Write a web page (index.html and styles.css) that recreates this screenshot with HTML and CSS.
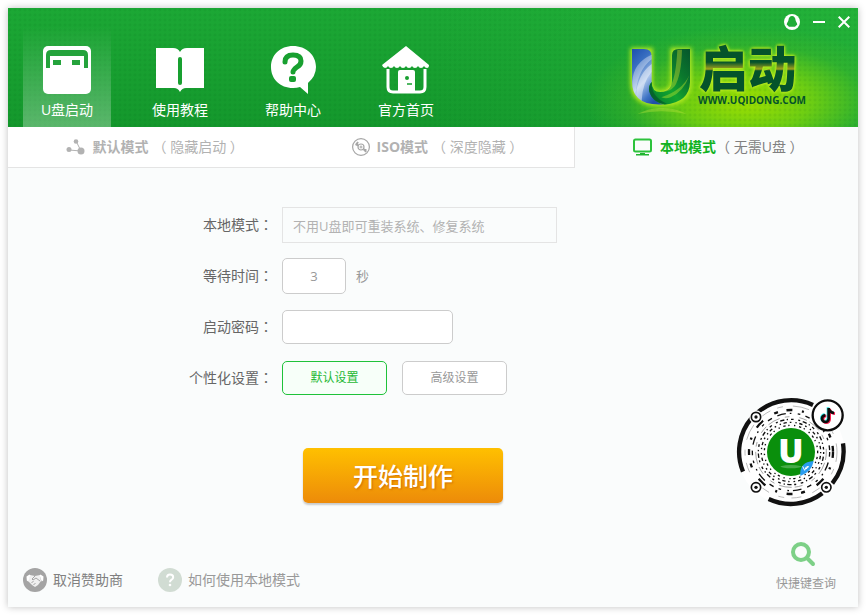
FILE: index.html
```
<!DOCTYPE html>
<html lang="zh-CN">
    <head>
        <meta charset="utf-8">
        <title>U启动</title>
        <link rel="stylesheet" href="styles.css">
    </head>
    <body>
        <div class="window">
        <!-- Header -->
        <header class="header">
            <nav class="nav">
                <a href="#usb" class="nav-item active">
                    <svg width="48" height="48" viewBox="0 0 48 48">
                        <rect width="48" height="48" rx="5" fill="#fff"/>
                        <path d="M3 22V9q0-5 5-5h32q5 0 5 5v13h-4V10H7v12z" fill="#25a33c"/>
                        <path d="M10 14h8v5h-8zM29 14h8v5h-8z" fill="#25a33c"/>
                    </svg>
                    <span>U盘启动</span>
                </a>
                <a href="#guide" class="nav-item">
                    <svg width="50" height="48" viewBox="0 0 50 48">
                        <path d="M1 2h17q5 0 7 4q2-4 7-4h17v40H31q-4 0-6 4q-2-4-6-4H1z" fill="#fff"/>
                        <path d="M25 13v24" stroke="#18a030" stroke-width="4" stroke-linecap="round"/>
                    </svg>
                    <span>使用教程</span>
                </a>
                <a href="#help" class="nav-item">
                    <svg width="48" height="48" viewBox="0 0 48 48">
                        <path d="M24 0C11 0 2 9 2 21s9 21 22 21q4 0 7-1l8 7v-11q8-7 8-16C47 9 37 0 24 0z" fill="#fff"/>
                        <path d="M16 16q0-7 8-7 8 0 8 6 0 4-4 6-4 3-4 5" fill="none" stroke="#18a030" stroke-width="5" stroke-linecap="round" stroke-linejoin="round"/>
                        <rect x="20" y="30" width="7" height="6" rx="2" fill="#18a030"/>
                    </svg>
                    <span>帮助中心</span>
                </a>
                <a href="#home" class="nav-item">
                    <svg width="48" height="48" viewBox="0 0 48 48">
                        <path d="M24 0L0 19q1 3 3 3 2 0 3-2 1 2 3 2t3-2q1 2 3 2t3-2q1 2 3 2t3-2q1 2 3 2t3-2q1 2 3 2t3-2q1 2 3 2t3-2q1 2 3 2 2 0 2-3z" fill="#fff"/>
                        <path d="M6 23v18q0 5 5 5h27q5 0 5-5V23" fill="none" stroke="#fff" stroke-width="3"/>
                        <path d="M16 47V26q0-2 2-2h13q2 0 2 2v21z" fill="#fff"/>
                        <circle cx="25" cy="32" r="2" fill="#18a030"/>
                        <path d="M25 38h5" stroke="#18a030" stroke-width="1.500"/>
                    </svg>
                    <span>官方首页</span>
                </a>
            </nav>
            <div class="brand">
                <div class="controls">
                    <button type="button" aria-label="QQ">
                        <svg width="16" height="16" viewBox="0 0 16 16">
                            <circle cx="8" cy="8" r="8" fill="#fff"/>
                            <path d="M8 2C6 2 4.500 4 4.500 6c0 1-2 3-1.700 5 .1.800.7.200 1 0 .3 1 .9 1.500 1.300 1.700h5.800c.4-.2 1-.7 1.300-1.700.3.200.9.800 1 0 .3-2-1.700-4-1.700-5 0-2-1.500-4-3.500-4z" fill="#20ac38"/>
                        </svg>
                    </button>
                    <button type="button" aria-label="最小化">
                        <svg width="12" height="12" viewBox="0 0 12 12"><path d="M0 6h12" stroke="#fff" stroke-width="2"/></svg>
                    </button>
                    <button type="button" aria-label="关闭">
                        <svg width="12" height="12" viewBox="0 0 12 12"><path d="M.7.7l10.600 10.600M11.300.7L.7 11.300" stroke="#fff" stroke-width="2"/></svg>
                    </button>
                </div>
                <svg class="logo" width="196" height="82" viewBox="66 120 588 246" role="img" aria-label="U启动">
                    <defs>
                        <linearGradient id="blue" x1="0" y1="0" x2=".6" y2="1">
                            <stop offset="0" stop-color="#1c4fae"/>
                            <stop offset=".3" stop-color="#3a70c2"/>
                            <stop offset=".6" stop-color="#a9c4ea"/>
                            <stop offset=".85" stop-color="#3d72c4"/>
                            <stop offset="1" stop-color="#2050a8"/>
                        </linearGradient>
                        <linearGradient id="green" x1="1" y1="0" x2="0" y2="1">
                            <stop offset="0" stop-color="#06552c"/>
                            <stop offset=".35" stop-color="#0b7a2d"/>
                            <stop offset=".6" stop-color="#12a52f"/>
                            <stop offset=".8" stop-color="#0a8f2f"/>
                            <stop offset="1" stop-color="#04582c"/>
                        </linearGradient>
                        <linearGradient id="ink" gradientUnits="userSpaceOnUse" x1="0" y1="150" x2="0" y2="280">
                            <stop offset=".28" stop-color="#04532b"/>
                            <stop offset=".44" stop-color="#a3a21c"/>
                            <stop offset=".48" stop-color="#04532b"/>
                        </linearGradient>
                        <filter id="glow" x="-20%" y="-20%" width="140%" height="140%">
                            <feGaussianBlur stdDeviation="6"/>
                        </filter>
                    </defs>
                    <path d="M96 148h58v100q0 28 28 28 34 0 34-34V148h54v100q0 66-88 66-86 0-86-66z" fill="#b4ea20" stroke="#b4ea20" stroke-width="10" filter="url(#glow)"/>
                    <!-- blue half of the mark -->
                    <path d="M96 147h36q23 0 23 22v78q-12 14-4 32q12 28 40 34q-52 4-76-18q-19-18-19-50z" fill="url(#blue)"/>
                    <path d="M97 246q2-58 58-82v14q-44 34-48 108q-10-14-10-40z" fill="#fff" opacity=".35"/>
                    <path d="M108 286q4-62 47-94v24q-28 32-30 86q-12-6-17-16z" fill="#fff" opacity=".45"/>
                    <!-- green half of the mark -->
                    <path d="M270 147v100q-2 60-76 67q-38-8-46-40q-4-16 7-28q0 30 26 30q35-2 35-36v-74q0-19 20-19z" fill="url(#green)"/>
                    <path d="M232 149q-4 76-18 104q-10 18-28 22q22 2 38-16q20-32 22-110z" fill="#d3e02a" opacity=".4"/>
                    <path d="M268 226q-22 46-84 66q14 6 28 0q40-18 56-66z" fill="#c5e82a" opacity=".4"/>
                    <path d="M155 246q-3 44 47 66q-42 0-54-36q-4-18 7-30z" fill="#04582c" opacity=".7"/>
                    <path d="M112 342q40-20 72-18 40-2 76 18-76-16-148 0z" fill="#b6e33c" opacity=".4"/>
                    <text class="logo-name" x="296" y="261" fill="url(#ink)">启动</text>
                    <text class="logo-url" x="294" y="312">WWW.UQIDONG.COM</text>
                </svg>
            </div>
        </header>

        <!-- Mode tabs -->
        <nav class="tabs">
            <a href="#default" class="tab">
                <svg width="20" height="16" viewBox="0 0 20 16" fill="#b2b2b2">
                    <path d="M3 11l12 1M10 2l5 10" stroke="#b2b2b2" fill="none"/>
                    <circle cx="3" cy="10.500" r="2.500"/><circle cx="10" cy="2.500" r="2.300"/><circle cx="15" cy="12" r="3.500"/>
                </svg>
                <strong>默认模式</strong>
                <span>（ 隐藏启动 ）</span>
            </a>
            <a href="#iso" class="tab">
                <svg width="18" height="18" viewBox="0 0 18 18" fill="none" stroke="#a6a6a6">
                    <circle cx="9" cy="9" r="8.400" stroke-width="1.200"/>
                    <path d="M4 7l2-3M3.500 6l3 1.500M11.500 12l3 0M12 11l2 3" stroke-width="2"/>
                    <circle cx="9" cy="9" r="3" fill="#fff" stroke-width="1.200"/>
                    <circle cx="9" cy="9" r="1"/>
                </svg>
                <strong>ISO模式</strong>
                <span>（ 深度隐藏 ）</span>
            </a>
            <a href="#local" class="tab current">
                <svg width="20" height="18" viewBox="0 0 20 18">
                    <rect x="1" y="1.500" width="17" height="12" rx="1.500" fill="none" stroke="#2cc23c" stroke-width="2"/>
                    <path d="M7 15h5v1h4v1.500H3V16h4z" fill="#1eb42e"/>
                </svg>
                <strong>本地模式</strong>
                <span>（ 无需U盘 ）</span>
            </a>
        </nav>

        <!-- Settings -->
        <main class="content">
            <form class="form">
                <div class="row">
                    <label for="mode">本地模式<i lang="zh-TW">：</i></label>
                    <input type="text" id="mode" class="mode" value="不用U盘即可重装系统、修复系统" readonly>
                </div>
                <div class="row">
                    <label for="wait">等待时间<i lang="zh-TW">：</i></label>
                    <input type="text" id="wait" class="wait" value="3">
                    <span class="unit">秒</span>
                </div>
                <div class="row">
                    <label for="password">启动密码<i lang="zh-TW">：</i></label>
                    <input type="password" id="password" class="password">
                </div>
                <div class="row">
                    <label for="defaults">个性化设置<i lang="zh-TW">：</i></label>
                    <button type="button" id="defaults" class="option selected">默认设置</button>
                    <button type="button" class="option">高级设置</button>
                </div>
                <button type="button" class="start">开始制作</button>
            </form>
            <svg class="code" width="110" height="110" viewBox="19 21 330 330">
                <circle cx="184" cy="186" r="160" fill="#fff"/>
                <g fill="none" stroke="#111">
                    <g stroke-width="13">
                        <path d="M84 67A156 156 0 0 1 250 45"/>
                        <path d="M66 84A156 156 0 0 0 40 245"/>
                        <path d="M117 327A156 156 0 0 0 278 310"/>
                        <path d="M340 160A156 156 0 0 1 308 280"/>
                    </g>
                    <circle cx="184" cy="186" r="138" stroke-width="2" stroke="#999" stroke-dasharray="30 22 18 30 50 35"/>
                    <circle cx="184" cy="186" r="126" stroke-width="7" stroke-dasharray="18 29 6 34 28 40 12 26"/>
                    <circle cx="184" cy="186" r="116" stroke-width="4" stroke-dasharray="14 18 26 12 5 19 8 16"/>
                    <circle cx="184" cy="186" r="106" stroke-width="2" stroke="#777" stroke-dasharray="24 9 38 16 14 30"/>
                    <circle cx="184" cy="186" r="98" stroke-width="4" stroke-dasharray="6 8 13 7 4 9 8 14"/>
                    <circle cx="184" cy="186" r="89" stroke-width="4" stroke-dasharray="4 8 10 9 5 12"/>
                    <circle cx="184" cy="186" r="80" stroke-width="4" stroke-dasharray="4 11 7 8 4 14"/>
                </g>
                <g fill="#fff" stroke="#111" stroke-width="5">
                    <circle cx="79" cy="81" r="20" stroke="none"/><circle cx="79" cy="81" r="14"/>
                    <circle cx="79" cy="292" r="20" stroke="none"/><circle cx="79" cy="292" r="14"/>
                    <circle cx="290" cy="292" r="20" stroke="none"/><circle cx="290" cy="292" r="14"/>
                </g>
                <g fill="#111"><circle cx="79" cy="81" r="5"/><circle cx="79" cy="292" r="5"/><circle cx="290" cy="292" r="5"/></g>
                <circle cx="184" cy="186" r="74" fill="#fff"/>
                <circle cx="184" cy="186" r="72" fill="#0a8f0c"/>
                <text class="code-mark" x="184" y="219">U</text>
                <path d="M152 229q32-8 64 0q-6 6-32 6t-32-6z" fill="#fff" opacity=".25"/>
                <path d="M252 213q-5 32-40 45q-4-42 40-45z" fill="#2a9df0"/>
                <path d="M219 229l6 12 5-11M234 228l-5 9 9-8" fill="none" stroke="#fff" stroke-width="3"/>
                <circle cx="294" cy="76" r="45" fill="#fff" stroke="#0c0c0c" stroke-width="7"/>
                <g fill="none" stroke-width="8">
                    <path d="M297 54v32a10 10 0 1 1-10-10M297 56q3 12 16 13" stroke="#25e5e0" transform="translate(-2 -2)"/>
                    <path d="M297 54v32a10 10 0 1 1-10-10M297 56q3 12 16 13" stroke="#f5204f" transform="translate(3 2)"/>
                    <path d="M297 54v32a10 10 0 1 1-10-10M297 56q3 12 16 13" stroke="#0c0c0c"/>
                </g>
            </svg>
        </main>

        <!-- Footer -->
        <footer class="footer">
            <a href="#sponsor" class="foot-link dark">
                <svg width="24" height="24" viewBox="0 0 24 24">
                    <circle cx="12" cy="12" r="12" fill="#a4a4a4"/>
                    <path d="M7 7l5 1 5-1 1 6-3 4-3 2-3-2-4-4z" fill="#f0f0f0"/>
                    <path d="M3.500 8.500l3-2 .8 1-2 6-1.500-1zM20.500 8.500l-3-2-.8 1 2 6 1.500-1z" fill="#fff"/>
                    <path d="M17 13l-4-3-3 2-1-1 3-3M8.500 15l2-2M10.500 17l2-2" stroke="#a4a4a4" fill="none"/>
                </svg>
                <span>取消赞助商</span>
            </a>
            <a href="#howto" class="foot-link">
                <svg width="24" height="24" viewBox="0 0 24 24">
                    <circle cx="12" cy="12" r="12" fill="#d1dcd3"/>
                    <path d="M9 9.500q0-3 3-3 3.200 0 3.200 2.700 0 1.500-1.600 2.500-1.600 1-1.600 2.600" fill="none" stroke="#fff" stroke-width="2"/>
                    <circle cx="12" cy="17" r="1.300" fill="#fff"/>
                </svg>
                <span>如何使用本地模式</span>
            </a>
            <a href="#keys" class="search-link">
                <svg width="30" height="26" viewBox="0 0 30 26" fill="none" stroke="#7dd087" stroke-linecap="round">
                    <circle cx="10" cy="10" r="8" stroke-width="4"/>
                    <path d="M17 17l5 5" stroke-width="4"/>
                </svg>
                <span>快捷键查询</span>
            </a>
        </footer>
        </div>
    </body>
</html>
```
FILE: styles.css
```
/* General */
* {
    box-sizing: border-box;
}

body {
    font-family: "Open Sans", "Noto Sans CJK SC", sans-serif;
    font-size: 14px;
    line-height: 20px;
    margin: 0;
    padding: 8px 8px 9px;
    background-color: #fff;
    color: #666;
}

a {
    color: inherit;
    text-decoration: none;
}

svg {
    display: block;
    flex: none;
}

button,
input {
    font: inherit;
    color: inherit;
}

button {
    cursor: pointer;
}

.window {
    display: flex;
    flex-direction: column;
    min-height: calc(100vh - 17px);
    background-color: #fafcfc;
    box-shadow: 0 0 7px rgba(0, 0, 0, 0.25);
}

/* Header */
.header {
    display: flex;
    justify-content: space-between;
    height: 119px;
    padding-left: 15px;
    color: #fff;
    background-color: #18a030;
    background-image:
        radial-gradient(circle at 2px 2px, rgba(0, 80, 20, 0.08) 1px, transparent 2px),
        radial-gradient(160px 75px at right 112px bottom 26px, #9ee000, rgba(130, 215, 10, 0.8) 40%, rgba(80, 190, 30, 0.3) 75%, transparent),
        linear-gradient(to right, transparent 50%, rgba(40, 185, 60, 0.6)),
        linear-gradient(#1ca835, #14982c);
    background-size: 5px 5px, auto, auto, auto;
}

.nav {
    display: flex;
    gap: 25px;
}

.nav-item {
    display: flex;
    flex-direction: column;
    align-items: center;
    gap: 6px;
    width: 88px;
    padding-top: 38px;
}

.nav-item.active {
    background: linear-gradient(transparent 15%, rgba(255, 255, 255, 0.3));
}

.brand {
    display: flex;
    flex-direction: column;
    align-items: flex-end;
}

.controls {
    display: flex;
    align-items: center;
    gap: 13px;
    height: 28px;
    padding-right: 8px;
}

.controls button {
    padding: 0;
    border: 0;
    background: none;
}

.logo {
    margin: 4px 40px 0 0;
    overflow: visible;
}

.logo-name {
    font-size: 147px;
    font-weight: 900;
    filter: drop-shadow(0 0 5px #c8f01e) drop-shadow(0 0 5px #b4ea20);
}

.logo-url {
    font-size: 30px;
    font-weight: 700;
    fill: #04532b;
}

/* Tabs */
.tabs {
    display: grid;
    grid-template-columns: 1fr 1fr 1fr;
}

.tab {
    display: flex;
    align-items: center;
    justify-content: center;
    gap: 4px;
    height: 41px;
    padding-left: 10px;
    border-bottom: 1px solid #e4e4e4;
    background-color: #fff;
    color: #b2b2b2;
}

.tab svg {
    margin-right: 3px;
}

.tab:nth-child(2) {
    border-right: 1px solid #e4e4e4;
}

.tab.current {
    gap: 0;
    padding-left: 4px;
    border-color: transparent;
    background: none;
    color: #808080;
}

.tab.current svg {
    margin-right: 7px;
}

.tab.current strong {
    color: #12b322;
}

/* Settings form */
.content {
    display: flex;
    flex: 1;
    align-items: flex-end;
    justify-content: space-between;
}

.form {
    display: flex;
    flex-direction: column;
    align-self: flex-start;
    gap: 15px;
    padding-top: 39px;
}

.row {
    display: flex;
    align-items: center;
    height: 36px;
}

.row label {
    width: 265px;
    margin-right: 9px;
    padding-bottom: 1px;
    text-align: right;
}

/* centred full-width colon */
.row label i {
    font-family: "Noto Sans CJK TC", sans-serif;
    font-style: normal;
    line-height: 1;
}

.row input {
    height: 36px;
    border: 1px solid #ccc;
    border-radius: 5px;
    background-color: #fff;
    color: #999;
    font-size: 13px;
}

.row .mode {
    width: 275px;
    padding: 0 10px;
    border-color: #e4e4e4;
    border-radius: 0;
    background: none;
    color: #b2b2b2;
}

.row .wait {
    width: 64px;
    text-align: center;
}

.row .password {
    width: 171px;
    height: 34px;
}

.unit {
    margin-left: 10px;
    color: #999;
    font-size: 13px;
}

.option {
    width: 105px;
    height: 34px;
    margin-right: 15px;
    border: 1px solid #ccc;
    border-radius: 5px;
    background-color: #fff;
    color: #999;
    font-size: 12px;
}

.option.selected {
    border-color: #1fc23a;
    background-color: #f7fff9;
    color: #1fb935;
}

.start {
    width: 200px;
    height: 55px;
    margin: 37px 0 0 295px;
    border: 0;
    border-radius: 5px;
    background: linear-gradient(#ffc000, #ed8b09);
    box-shadow: 0 2px 2px rgba(0, 0, 0, 0.2);
    color: #fff;
    font-size: 25px;
    font-weight: 500;
    text-shadow: 1px 1px 2px rgba(190, 80, 0, 0.6);
}

.code {
    margin: 0 12px 35px 0;
}

.code-mark {
    font-family: "Open Sans", sans-serif;
    font-size: 100px;
    font-weight: 800;
    text-anchor: middle;
    fill: #fff;
}

/* Footer */
.footer {
    display: flex;
    align-items: flex-end;
    gap: 35px;
    padding: 0 22px 13px 15px;
}

.foot-link {
    display: flex;
    align-items: center;
    gap: 6px;
    height: 28px;
    color: #999;
}

.foot-link.dark {
    color: #808080;
}

.search-link {
    display: flex;
    flex-direction: column;
    align-items: center;
    gap: 6px;
    margin-left: auto;
    color: #999;
    font-size: 12px;
}
```
